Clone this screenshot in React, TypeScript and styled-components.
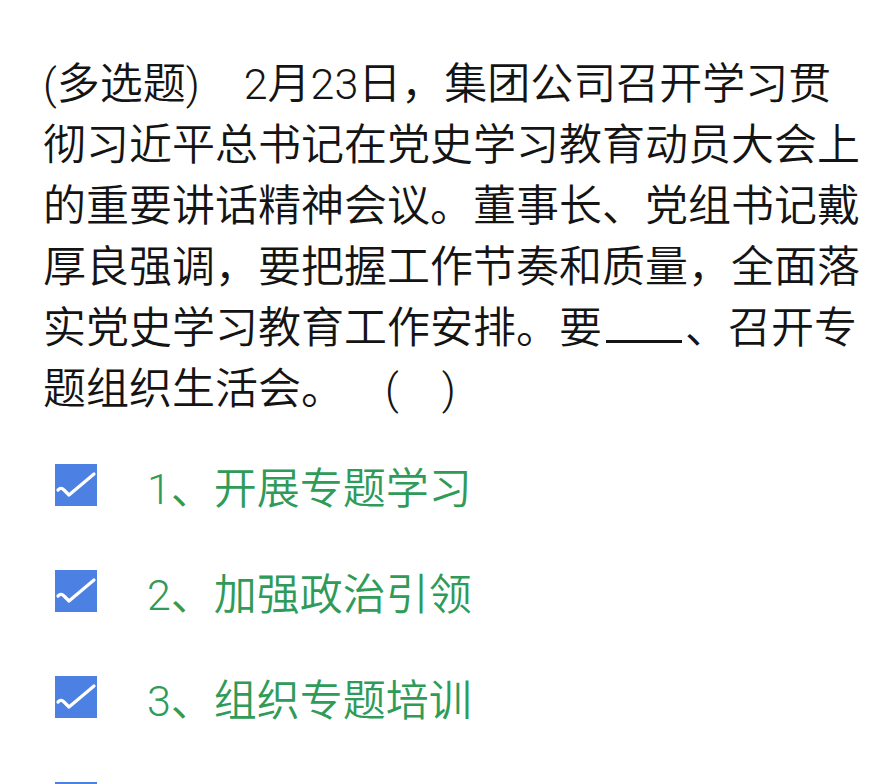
import React from "react"
import styled, { createGlobalStyle } from "styled-components"

const GlobalStyle = createGlobalStyle`
    html, body {
        margin: 0;
        padding: 0;
        background: #ffffff;
    }
    body {
        font-family: Roboto, "Noto Sans CJK SC", "Noto Sans", sans-serif;
        font-weight: 350;
    }
`

const Page = styled.div`
    display: flex;
    flex-direction: column;
    padding: 54px 0 0 43px;
    width: 876px;
    height: 784px;
    box-sizing: border-box;
    overflow: hidden;
`

const Question = styled.div`
    display: flex;
    flex-direction: column;
    color: #141414;
    font-size: 43px;
    line-height: 61px;
`

const Line = styled.div`
    white-space: pre;
`

const Gap = styled.span<{ $w: number }>`
    display: inline-block;
    width: ${(p) => p.$w}px;
`

const Blank = styled.span`
    display: inline-block;
    width: 76px;
    height: 30px;
    border-bottom: 3px solid #141414;
    margin: 0 3px 0 4px;
`

const Options = styled.div`
    display: flex;
    flex-direction: column;
    margin-top: 12px;
    padding-left: 12px;
`

const Option = styled.div`
    display: flex;
    align-items: center;
    gap: 50px;
    height: 106px;
    flex-shrink: 0;
`

const Box = styled.div`
    width: 42px;
    height: 42px;
    background: #4d80e3;
    flex-shrink: 0;
`

const Label = styled.span`
    color: #2f9b58;
    font-size: 43px;
    white-space: nowrap;
`

const Check = () => (
    <svg width="42" height="42" viewBox="0 0 42 42">
        <path d="M3 26 Q6 23 9 26 L14 31 L39 10" fill="none" stroke="#ffffff" strokeWidth="3.2" strokeLinecap="round" strokeLinejoin="round" />
    </svg>
)

const options = [
    "1、开展专题学习",
    "2、加强政治引领",
    "3、组织专题培训",
    "4、开展“我为群众办实事”实践活动",
]

const App = () => (
    <>
        <GlobalStyle />
        <Page>
            <Question>
                <Line>(多选题)<Gap $w={44} />2月23日，集团公司召开学习贯</Line>
                <Line>彻习近平总书记在党史学习教育动员大会上</Line>
                <Line>的重要讲话精神会议。董事长、党组书记戴</Line>
                <Line>厚良强调，要把握工作节奏和质量，全面落</Line>
                <Line>实党史学习教育工作安排。要<Blank />、召开专</Line>
                <Line>题组织生活会。<Gap $w={41} />(<Gap $w={43} />)</Line>
            </Question>
            <Options>
                {options.map((o) => (
                    <Option key={o}>
                        <Box><Check /></Box>
                        <Label>{o}</Label>
                    </Option>
                ))}
            </Options>
        </Page>
    </>
)

export default App
